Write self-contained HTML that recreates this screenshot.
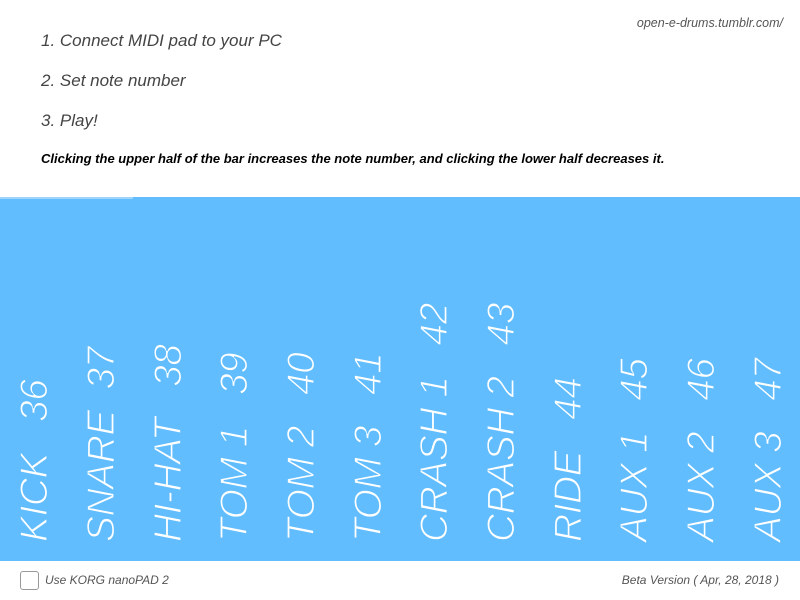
<!DOCTYPE html>
<html><head><meta charset="utf-8"><style>
body{margin:0;width:800px;height:600px;overflow:hidden;background:#fff;font-family:"Liberation Sans",sans-serif;position:relative}
.t{position:absolute;font-style:italic;color:#333;white-space:nowrap}
.blue{position:absolute;left:0;top:197px;width:800px;height:364px;background:#62bdfe}
.hl{position:absolute;left:0;top:197px;width:133px;height:2px;background:#9dd4fb}
.lab{position:absolute;top:542px;transform:rotate(-90deg);transform-origin:0 0;font-size:39px;line-height:40px;color:#fff;font-style:italic;white-space:pre;letter-spacing:-0.5px;-webkit-text-stroke:1.2px #62bdfe}
</style></head><body>
<div class="t" style="right:17px;top:16px;font-size:12.5px;color:#555">open-e-drums.tumblr.com/</div>
<div class="t" style="left:41px;top:31px;font-size:17px;color:#444">1. Connect MIDI pad to your PC</div>
<div class="t" style="left:41px;top:71px;font-size:17px;color:#444">2. Set note number</div>
<div class="t" style="left:41px;top:111px;font-size:17px;color:#444">3. Play!</div>
<div class="t" style="left:41px;top:151px;font-size:13px;font-weight:bold;color:#000">Clicking the upper half of the bar increases the note number, and clicking the lower half decreases it.</div>
<div class="blue"></div><div class="hl"></div>
<div class="lab" style="left:15px">KICK   36</div>
<div class="lab" style="left:82px">SNARE  37</div>
<div class="lab" style="left:149px">HI-HAT   38</div>
<div class="lab" style="left:215px">TOM 1   39</div>
<div class="lab" style="left:282px">TOM 2   40</div>
<div class="lab" style="left:349px">TOM 3   41</div>
<div class="lab" style="left:415px">CRASH 1   42</div>
<div class="lab" style="left:482px">CRASH 2   43</div>
<div class="lab" style="left:549px">RIDE   44</div>
<div class="lab" style="left:615px">AUX 1   45</div>
<div class="lab" style="left:682px">AUX 2   46</div>
<div class="lab" style="left:749px">AUX 3   47</div>
<div style="position:absolute;left:20px;top:571px;width:17px;height:17px;border:1px solid #999;border-radius:3px"></div>
<div class="t" style="left:45px;top:573px;font-size:12px;color:#555">Use KORG nanoPAD 2</div>
<div class="t" style="right:21px;top:573px;font-size:12px;color:#555">Beta Version ( Apr, 28, 2018 )</div>
</body></html>
